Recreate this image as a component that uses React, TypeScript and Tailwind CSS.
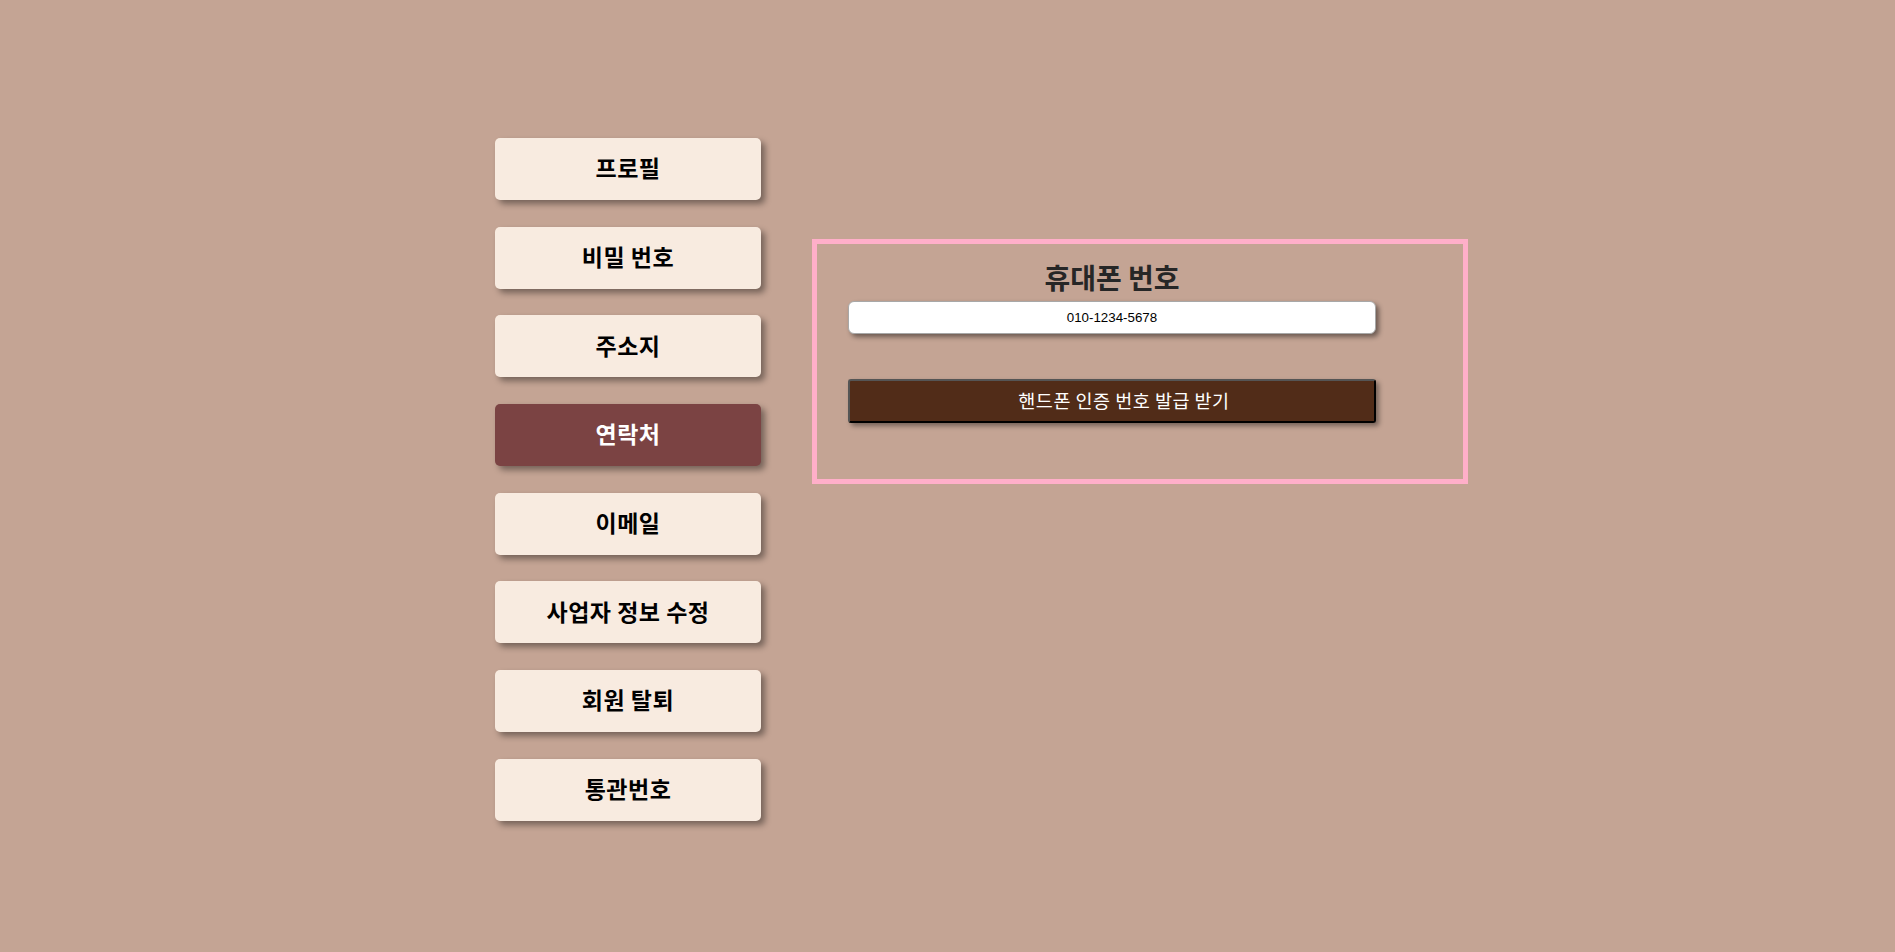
import { useState } from 'react';

const menus = ['프로필', '비밀 번호', '주소지', '연락처', '이메일', '사업자 정보 수정', '회원 탈퇴', '통관번호'];

const font = { fontFamily: '"Noto Sans CJK KR", "Noto Sans", sans-serif' };

const App = () => {
  const [active, setActive] = useState('연락처');
  const [phone, setPhone] = useState('010-1234-5678');

  return (
    <div className="min-h-[952px] w-full bg-[#c4a494] pt-[138px] pl-[495px]" style={font}>
      <div className="flex items-start gap-[51px]">
        <nav className="flex w-[266px] flex-col gap-[26.7px]">
          {menus.map((m) => {
            const isActive = active === m;
            return (
              <button
                key={m}
                onClick={() => setActive(m)}
                className={`flex h-[62px] items-center justify-center rounded-[5px] pb-[3px] text-[23px] font-bold tracking-[0.5px] shadow-[4px_4px_6px_rgba(0,0,0,0.4)] ${
                  isActive ? 'bg-[#7b4343] text-white' : 'bg-[#f8ebe0] text-black'
                }`}
              >
                {m}
              </button>
            );
          })}
        </nav>

        <section className="mt-[101px] h-[245px] w-[656px] border-[5px] border-[#ffafc9] pl-[31px] pt-[14px]">
          <div className="w-[528px]">
            <h2 className="text-center text-[28px] font-bold leading-[38px] text-[#262626]">휴대폰 번호</h2>
            <input
              value={phone}
              onChange={(e) => setPhone(e.target.value)}
              className="mt-[5px] block h-[33px] w-full rounded-[6px] border border-[#a8a8a8] bg-white text-center text-[13.333px] text-black shadow-[3px_3px_5px_rgba(0,0,0,0.45)] outline-none"
              style={{ fontFamily: '"Liberation Sans", Arial, sans-serif' }}
            />
            <button className="mt-[45px] block h-[44px] w-full rounded-[3px] border-2 border-t-[#555] border-l-[#555] border-b-black border-r-black bg-[#512c18] pl-[24px] text-center text-[18.5px] tracking-[0.5px] text-white shadow-[3px_3px_5px_rgba(0,0,0,0.4)]">
              핸드폰 인증 번호 발급 받기
            </button>
          </div>
        </section>
      </div>
    </div>
  );
};

export default App;
